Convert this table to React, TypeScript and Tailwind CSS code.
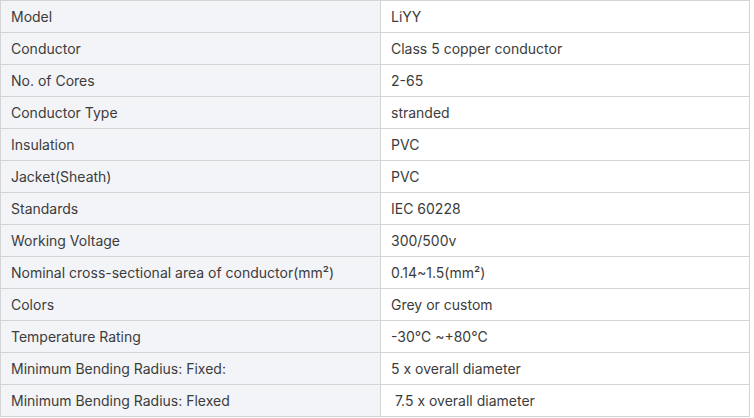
const rows: [string, string][] = [
  ['Model', 'LiYY'],
  ['Conductor', 'Class 5 copper conductor'],
  ['No. of Cores', '2-65'],
  ['Conductor Type', 'stranded'],
  ['Insulation', 'PVC'],
  ['Jacket(Sheath)', 'PVC'],
  ['Standards', 'IEC 60228'],
  ['Working Voltage', '300/500v'],
  ['Nominal cross-sectional area of conductor(mm²)', '0.14~1.5(mm²)'],
  ['Colors', 'Grey or custom'],
  ['Temperature Rating', '-30℃ ~+80℃'],
  ['Minimum Bending Radius: Fixed:', '5 x overall diameter'],
  ['Minimum Bending Radius: Flexed', ' 7.5 x overall diameter'],
]

export default function App() {
  return (
    <div className="bg-white" style={{ fontFamily: 'Inter, "Noto Sans", sans-serif' }}>
      <table className="w-[750px] table-fixed border-collapse text-[14px] leading-[20px] text-[#3c3c3c]">
        <tbody>
          {rows.map(([label, value]) => (
            <tr key={label} className="h-[32px]">
              <td className="w-[380px] border border-[#d4d4d4] bg-[#f3f4f8] px-[10px] pt-px pb-0 align-middle">
                {label}
              </td>
              <td className="border border-[#d4d4d4] bg-white px-[10px] pt-px pb-0 align-middle whitespace-pre">
                {value}
              </td>
            </tr>
          ))}
        </tbody>
      </table>
    </div>
  )
}
